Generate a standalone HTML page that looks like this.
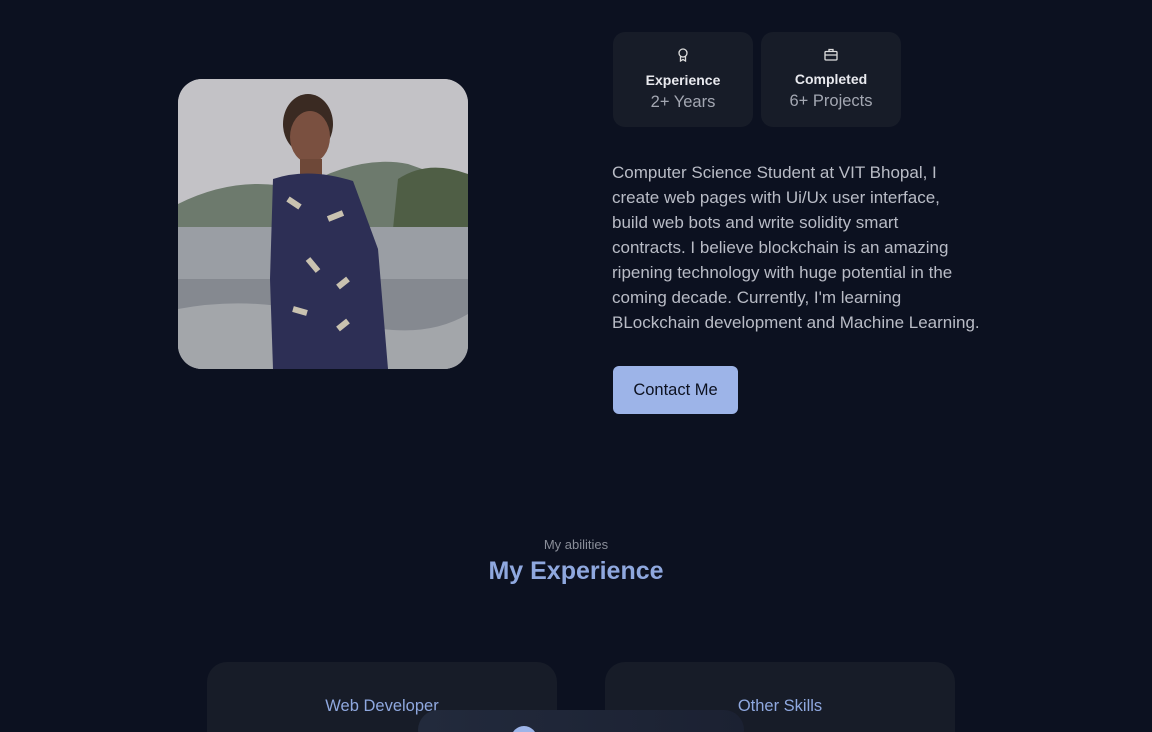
<!DOCTYPE html>
<html><head><meta charset="utf-8"><style>
*{margin:0;padding:0;box-sizing:border-box}
html,body{width:1152px;height:732px;overflow:hidden}
body{background:#0c1120;font-family:"Liberation Sans",sans-serif;position:relative;color:#c9ccd4}
.card{position:absolute;top:32px;width:140px;height:95px;background:#171c28;border-radius:12px;text-align:center}
.card svg{margin-top:16px}
.card b{display:block;color:#e8e9ee;font-size:14px;margin-top:5px}
.card span{display:block;color:#a3a7b2;font-size:16.5px;margin-top:5px}
.photo{position:absolute;left:178px;top:79px;width:290px;height:290px;border-radius:24px;overflow:hidden;background:#b9b8bd}
p.desc{position:absolute;left:612px;top:160px;white-space:nowrap;font-size:17px;line-height:25px;color:#b9bcc6}
.btn{position:absolute;left:613px;top:366px;width:125px;height:48px;background:#9db4e8;border-radius:6px;color:#0c1120;font-size:16.5px;text-align:center;line-height:48px}
.sub{position:absolute;top:537px;width:100%;text-align:center;font-size:13px;color:#8a8e99}
.h{position:absolute;top:557px;width:100%;text-align:center;font-size:25px;font-weight:bold;color:#8fa8df}
.ex{position:absolute;top:662px;width:350px;height:90px;background:#171c28;border-radius:20px;text-align:center;color:#8fa8df;font-size:16.5px;padding-top:35px}
.nav{position:absolute;left:418px;top:710px;width:326px;height:40px;background:linear-gradient(90deg,#222a3c,#1b2132);border-radius:20px}
.dot{position:absolute;left:511px;top:726px;width:26px;height:26px;border-radius:50%;background:#9db4e8}
</style></head><body>
<div class="card" style="left:613px"><svg width="12" height="14" viewBox="0 0 12 14" fill="none" stroke="#ddd" stroke-width="1.3"><circle cx="6" cy="5" r="4"/><path d="M3.5 8.5V13L6 11.5 8.5 13V8.5"/></svg><b>Experience</b><span>2+ Years</span></div>
<div class="card" style="left:761px"><svg width="14" height="13" viewBox="0 0 14 13" fill="none" stroke="#ddd" stroke-width="1.3"><rect x="1" y="3.5" width="12" height="8.5" rx="1"/><path d="M5 3.5V1.5h4v2M1 7h12"/></svg><b>Completed</b><span>6+ Projects</span></div>
<div class="photo">
<svg width="290" height="290" viewBox="0 0 290 290">
<rect width="290" height="150" fill="#c3c2c6"/>
<path d="M0 125 Q60 95 120 110 Q180 75 230 85 Q260 95 290 110 V150 H0Z" fill="#6d7a6d"/>
<path d="M220 100 Q250 80 290 95 V150 H215Z" fill="#4f5e45"/>
<rect x="0" y="148" width="290" height="142" fill="#9a9ea4"/>
<rect x="0" y="200" width="290" height="90" fill="#858990"/>
<path d="M0 230 Q80 215 160 240 T290 235 V290 H0Z" fill="#b7b9bd" opacity=".6"/>
<ellipse cx="130" cy="45" rx="25" ry="30" fill="#3a2a22"/>
<ellipse cx="132" cy="58" rx="20" ry="26" fill="#7a5040"/>
<rect x="122" y="80" width="22" height="20" fill="#6e4838"/>
<path d="M95 100 Q130 88 175 102 L200 170 L210 290 H95 L92 200 Z" fill="#2d2f55"/>
<path d="M110 120 l12 8 M150 140 l15 -6 M130 180 l10 12 M170 200 l-10 8 M115 230 l14 4 M160 250 l10 -8" stroke="#c9c2b0" stroke-width="6"/>
</svg></div>
<p class="desc">Computer Science Student at VIT Bhopal, I<br>create web pages with Ui/Ux user interface,<br>build web bots and write solidity smart<br>contracts. I believe blockchain is an amazing<br>ripening technology with huge potential in the<br>coming decade. Currently, I'm learning<br>BLockchain development and Machine Learning.</p>
<div class="btn">Contact Me</div>
<div class="sub">My abilities</div>
<div class="h">My Experience</div>
<div class="ex" style="left:207px">Web Developer</div>
<div class="ex" style="left:605px">Other Skills</div>
<div class="nav"></div><div class="dot"></div>
</body></html>
